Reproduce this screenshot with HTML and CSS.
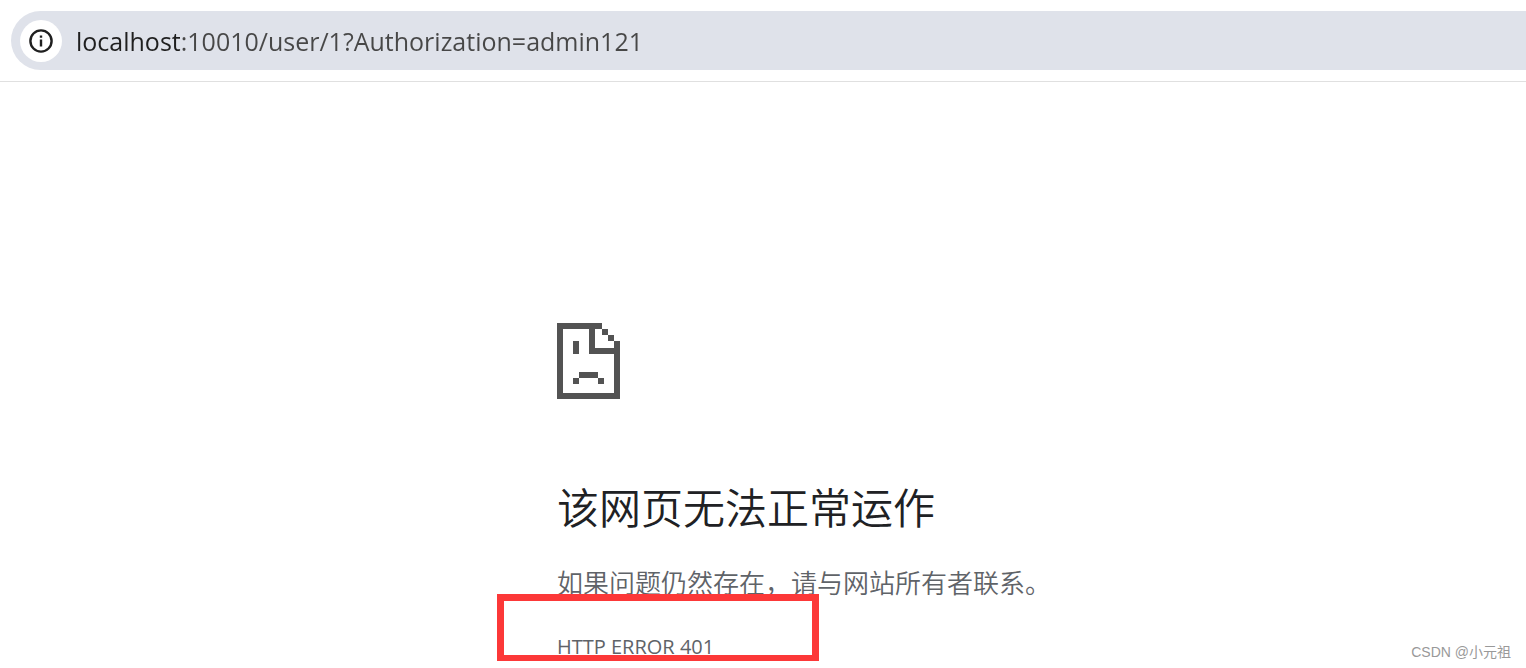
FILE: index.html
```html
<!DOCTYPE html>
<html lang="zh-CN">
<head>
    <meta charset="UTF-8">
    <meta name="viewport" content="width=device-width, initial-scale=1.0">
    <title>localhost</title>
    <link rel="stylesheet" href="styles.css">
</head>
<body>
    <header class="toolbar">
        <div class="address-bar">
            <button class="site-info" type="button" aria-label="查看网站信息">
                <svg width="24" height="24" viewBox="0 0 24 24">
                    <circle cx="12" cy="12" r="10.6" fill="none" stroke="#1f1f1f" stroke-width="2.4"/>
                    <path d="M10.8 10.6h2.4v6.8h-2.4zM10.8 6.4h2.4v2.4h-2.4z" fill="#1f1f1f"/>
                </svg>
            </button>
            <input class="url" type="text" aria-label="地址" spellcheck="false" value="localhost:10010/user/1?Authorization=admin121">
        </div>
    </header>

    <main class="error-page">
        <svg class="sad-page" width="63" height="76" viewBox="0 0 63 76" fill="#535353" shape-rendering="crispEdges">
            <path d="M0 0h45v6H6v64h51V31H32V6h6v19h19v-7h6v58H0z"/>
            <path d="M45 6h6v6h-6zM51 12h6v6h-6z"/>
            <path d="M16 18h6v13h-6zM22 49h19v6H22zM16 55h6v6h-6zM41 55h6v6h-6z"/>
        </svg>
        <h1>该网页无法正常运作</h1>
        <p class="summary">如果问题仍然存在，请与网站所有者联系。</p>
        <div class="error-code">HTTP ERROR 401<span class="highlight"></span></div>
    </main>

    <div class="watermark">CSDN @小元祖</div>
</body>
</html>
```

FILE: styles.css
```css
* { box-sizing: border-box; }
body { margin: 0; background: #fff; font-family: "Open Sans", "Noto Sans CJK SC", sans-serif; color: #5f6368; }

.toolbar { padding: 11px 0 11px 11px; border-bottom: 1px solid #e0e0e0; }
.address-bar { display: flex; align-items: center; gap: 14px; padding: 9px 9px 8px; background: #dfe2ea; border-radius: 30px 0 0 30px; }
.site-info { display: flex; align-items: center; justify-content: center; flex: none; width: 42px; height: 42px; padding: 0; border: none; border-radius: 50%; background: #fff; cursor: pointer; }
/* the host is darker than the rest of the address */
.url { flex: 1; min-width: 0; height: 42px; padding: 0; border: none; outline: none; font: 25px "Open Sans", sans-serif; color: transparent; caret-color: #1f1f1f; background: linear-gradient(to right, #1f1f1f 104px, #474747 104px); -webkit-background-clip: text; background-clip: text; }

.error-page { padding: 241px 20px 0 36.5%; }
.sad-page { display: block; }
h1 { margin: 75px 0 0; font-size: 42px; font-weight: 350; line-height: 64px; font-family: "Noto Sans CJK SC", sans-serif; color: #202124; }
.summary { margin: 25px 0 0; font-size: 26px; font-weight: 350; line-height: 40px; }
.error-code { position: relative; width: fit-content; margin-top: 30px; font-size: 20px; line-height: 28px; }
.highlight { position: absolute; top: -39px; left: -60px; width: 322px; height: 68px; border: 7px solid #fc3838; }

.watermark { position: absolute; right: 15px; bottom: 6px; font: 14px/20px "Liberation Sans", "Noto Sans CJK SC", sans-serif; color: #999; }
```
